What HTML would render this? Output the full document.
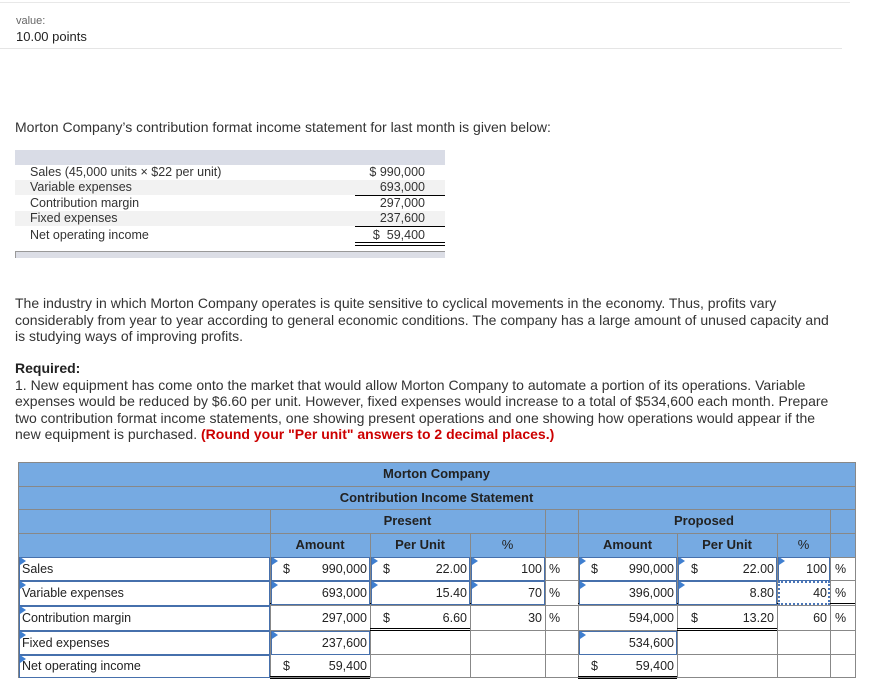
<!DOCTYPE html>
<html><head><meta charset="utf-8"><style>
*{margin:0;padding:0;box-sizing:border-box}
body{width:875px;height:692px;background:#fff;font-family:"Liberation Sans",Arial,sans-serif;color:#333;position:relative;overflow:hidden}
.a{position:absolute;white-space:nowrap}
p.t{position:absolute;left:15px;width:818px;font-size:14px;line-height:16.5px;color:#333}
.st{position:absolute;left:30px;font-size:12.5px;color:#333}
.sv{position:absolute;left:355px;width:70px;text-align:right;font-size:12.5px;color:#333}
.c{position:absolute;font-size:12.5px;color:#222;line-height:22px;height:23px}
.h{position:absolute;font-size:13px;font-weight:bold;color:#222;text-align:center;line-height:23px}
.in{position:absolute;border:1.5px solid #4670ac;background:#fff}
.tri{position:absolute;width:0;height:0;border-top:4px solid transparent;border-bottom:4px solid transparent;border-left:6px solid #3f7fd0}
.vl{position:absolute;width:1px;background:#888}
.hl{position:absolute;height:1px;background:#888}
</style></head><body>
<div class="a" style="left:0;top:2px;width:850px;height:1px;background:#e8e8e8"></div>
<div class="a" style="left:16px;top:15px;font-size:11px;color:#666">value:</div>
<div class="a" style="left:16px;top:29px;font-size:13px;color:#222">10.00 points</div>
<div class="a" style="left:0;top:48px;width:842px;height:1px;background:#e5e5e5"></div>
<div class="a" style="left:15px;top:119px;font-size:14px;color:#333">Morton Company’s contribution format income statement for last month is given below:</div>

<div class="a" style="left:15px;top:150px;width:430px;height:15px;background:#d9dce6"></div>
<div class="a" style="left:15px;top:180px;width:430px;height:15px;background:#f2f2f2"></div>
<div class="a" style="left:15px;top:211px;width:430px;height:15px;background:#f2f2f2"></div>
<div class="st" style="top:165px">Sales (45,000 units × $22 per unit)</div>
<div class="st" style="top:180px">Variable expenses</div>
<div class="st" style="top:196px">Contribution margin</div>
<div class="st" style="top:211px">Fixed expenses</div>
<div class="st" style="top:228px">Net operating income</div>
<div class="sv" style="top:165px">$ 990,000</div>
<div class="sv" style="top:180px">693,000</div>
<div class="sv" style="top:196px">297,000</div>
<div class="sv" style="top:211px">237,600</div>
<div class="sv" style="top:228px">$&nbsp;&nbsp;59,400</div>
<div class="a" style="left:355px;top:195px;width:90px;height:1px;background:#000"></div>
<div class="a" style="left:355px;top:226px;width:90px;height:1px;background:#000"></div>
<div class="a" style="left:355px;top:242px;width:90px;height:4px;border-top:1px solid #000;border-bottom:1px solid #000"></div>
<div class="a" style="left:15px;top:251px;width:430px;height:7px;background:#dcdee6;border-top:1px solid #999;border-left:1px solid #999"></div>

<p class="t" style="top:295px">The industry in which Morton Company operates is quite sensitive to cyclical movements in the economy. Thus, profits vary considerably from year to year according to general economic conditions. The company has a large amount of unused capacity and is studying ways of improving profits.</p>
<p class="t" style="top:360px"><b style="color:#222">Required:</b><br>1. New equipment has come onto the market that would allow Morton Company to automate a portion of its operations. Variable expenses would be reduced by $6.60 per unit. However, fixed expenses would increase to a total of $534,600 each month. Prepare two contribution format income statements, one showing present operations and one showing how operations would appear if the new equipment is purchased. <b style="color:#c00">(Round your "Per unit" answers to 2 decimal places.)</b></p>

<!-- table -->
<div class="a" style="left:18px;top:462px;width:837px;height:95px;background:#76aae2"></div>
<div class="a" style="left:18px;top:557px;width:837px;height:121px;background:#fff"></div>
<div class="hl" style="left:18px;top:462px;width:837px"></div>
<div class="hl" style="left:18px;top:486px;width:837px"></div>
<div class="hl" style="left:18px;top:509px;width:837px"></div>
<div class="hl" style="left:18px;top:533px;width:837px"></div>
<div class="hl" style="left:18px;top:557px;width:837px"></div>
<div class="hl" style="left:18px;top:580px;width:837px"></div>
<div class="hl" style="left:18px;top:605px;width:837px"></div>
<div class="hl" style="left:18px;top:630px;width:837px"></div>
<div class="hl" style="left:18px;top:654px;width:837px"></div>
<div class="hl" style="left:18px;top:677px;width:837px"></div>
<div class="vl" style="left:18px;top:462px;height:216px"></div>
<div class="vl" style="left:855px;top:462px;height:216px"></div>
<div class="vl" style="left:270px;top:509px;height:169px"></div>
<div class="vl" style="left:545px;top:509px;height:169px"></div>
<div class="vl" style="left:578px;top:509px;height:169px"></div>
<div class="vl" style="left:830px;top:509px;height:169px"></div>
<div class="vl" style="left:370px;top:533px;height:145px"></div>
<div class="vl" style="left:470px;top:533px;height:145px"></div>
<div class="vl" style="left:677px;top:533px;height:145px"></div>
<div class="vl" style="left:777px;top:533px;height:145px"></div>
<div class="a" style="left:270px;top:603px;width:275px;height:1px;background:#000"></div>
<div class="a" style="left:578px;top:603px;width:277px;height:1px;background:#000"></div>
<div class="a" style="left:370px;top:628px;width:100px;height:3px;border-top:1px solid #000;border-bottom:1px solid #000"></div>
<div class="a" style="left:677px;top:628px;width:100px;height:3px;border-top:1px solid #000;border-bottom:1px solid #000"></div>
<div class="a" style="left:270px;top:676px;width:100px;height:3px;border-top:1px solid #000;border-bottom:1px solid #000"></div>
<div class="a" style="left:578px;top:676px;width:99px;height:3px;border-top:1px solid #000;border-bottom:1px solid #000"></div>

<div class="h" style="left:18px;top:462px;width:837px">Morton Company</div>
<div class="h" style="left:18px;top:486px;width:837px">Contribution Income Statement</div>
<div class="h" style="left:270px;top:509px;width:275px">Present</div>
<div class="h" style="left:578px;top:509px;width:252px">Proposed</div>
<div class="h" style="left:270px;top:533px;width:100px">Amount</div>
<div class="h" style="left:370px;top:533px;width:100px">Per Unit</div>
<div class="h" style="left:470px;top:533px;width:75px;font-weight:normal">%</div>
<div class="h" style="left:578px;top:533px;width:99px">Amount</div>
<div class="h" style="left:677px;top:533px;width:100px">Per Unit</div>
<div class="h" style="left:777px;top:533px;width:53px;font-weight:normal">%</div>

<div class="in" style="left:19px;top:557px;width:251px;height:24px"></div>
<div class="in" style="left:19px;top:581px;width:251px;height:25px"></div>
<div class="in" style="left:19px;top:606px;width:251px;height:25px"></div>
<div class="in" style="left:19px;top:631px;width:251px;height:24px"></div>
<div class="in" style="left:19px;top:655px;width:251px;height:23px"></div>
<div class="in" style="left:271px;top:557px;width:99px;height:24px"></div>
<div class="in" style="left:371px;top:557px;width:99px;height:24px"></div>
<div class="in" style="left:471px;top:557px;width:74px;height:24px"></div>
<div class="in" style="left:271px;top:581px;width:99px;height:24px"></div>
<div class="in" style="left:371px;top:581px;width:99px;height:24px"></div>
<div class="in" style="left:471px;top:581px;width:74px;height:24px"></div>
<div class="in" style="left:271px;top:631px;width:99px;height:24px"></div>
<div class="in" style="left:579px;top:557px;width:98px;height:24px"></div>
<div class="in" style="left:678px;top:557px;width:99px;height:24px"></div>
<div class="in" style="left:778px;top:557px;width:52px;height:24px"></div>
<div class="in" style="left:579px;top:581px;width:98px;height:24px"></div>
<div class="in" style="left:678px;top:581px;width:99px;height:24px"></div>
<div class="in" style="left:778px;top:581px;width:52px;height:24px;border:2px dotted #4a76b8"></div>
<div class="in" style="left:579px;top:631px;width:98px;height:24px"></div>
<div class="tri" style="left:20px;top:557px"></div><div class="tri" style="left:20px;top:581px"></div><div class="tri" style="left:20px;top:606px"></div><div class="tri" style="left:20px;top:631px"></div><div class="tri" style="left:20px;top:655px"></div>
<div class="tri" style="left:272px;top:557px"></div><div class="tri" style="left:272px;top:581px"></div><div class="tri" style="left:272px;top:631px"></div>
<div class="tri" style="left:372px;top:557px"></div><div class="tri" style="left:372px;top:581px"></div>
<div class="tri" style="left:472px;top:557px"></div><div class="tri" style="left:472px;top:581px"></div>
<div class="tri" style="left:580px;top:557px"></div><div class="tri" style="left:580px;top:581px"></div><div class="tri" style="left:580px;top:631px"></div>
<div class="tri" style="left:679px;top:557px"></div><div class="tri" style="left:679px;top:581px"></div>
<div class="tri" style="left:779px;top:557px"></div>

<div class="c" style="left:22px;top:558px">Sales</div>
<div class="c" style="left:22px;top:582px">Variable expenses</div>
<div class="c" style="left:22px;top:607px">Contribution margin</div>
<div class="c" style="left:22px;top:632px">Fixed expenses</div>
<div class="c" style="left:22px;top:655px">Net operating income</div>
<div class="c" style="left:283px;top:558px">$</div>
<div class="c" style="left:283px;top:655px">$</div>
<div class="c" style="left:270px;top:558px;width:97px;text-align:right">990,000</div>
<div class="c" style="left:270px;top:582px;width:97px;text-align:right">693,000</div>
<div class="c" style="left:270px;top:607px;width:97px;text-align:right">297,000</div>
<div class="c" style="left:270px;top:632px;width:97px;text-align:right">237,600</div>
<div class="c" style="left:270px;top:655px;width:97px;text-align:right">59,400</div>
<div class="c" style="left:383px;top:558px">$</div>
<div class="c" style="left:383px;top:607px">$</div>
<div class="c" style="left:370px;top:558px;width:97px;text-align:right">22.00</div>
<div class="c" style="left:370px;top:582px;width:97px;text-align:right">15.40</div>
<div class="c" style="left:370px;top:607px;width:97px;text-align:right">6.60</div>
<div class="c" style="left:470px;top:558px;width:72px;text-align:right">100</div>
<div class="c" style="left:470px;top:582px;width:72px;text-align:right">70</div>
<div class="c" style="left:470px;top:607px;width:72px;text-align:right">30</div>
<div class="c" style="left:549px;top:558px">%</div>
<div class="c" style="left:549px;top:582px">%</div>
<div class="c" style="left:549px;top:607px">%</div>
<div class="c" style="left:591px;top:558px">$</div>
<div class="c" style="left:591px;top:655px">$</div>
<div class="c" style="left:578px;top:558px;width:96px;text-align:right">990,000</div>
<div class="c" style="left:578px;top:582px;width:96px;text-align:right">396,000</div>
<div class="c" style="left:578px;top:607px;width:96px;text-align:right">594,000</div>
<div class="c" style="left:578px;top:632px;width:96px;text-align:right">534,600</div>
<div class="c" style="left:578px;top:655px;width:96px;text-align:right">59,400</div>
<div class="c" style="left:691px;top:558px">$</div>
<div class="c" style="left:691px;top:607px">$</div>
<div class="c" style="left:677px;top:558px;width:97px;text-align:right">22.00</div>
<div class="c" style="left:677px;top:582px;width:97px;text-align:right">8.80</div>
<div class="c" style="left:677px;top:607px;width:97px;text-align:right">13.20</div>
<div class="c" style="left:777px;top:558px;width:50px;text-align:right">100</div>
<div class="c" style="left:777px;top:582px;width:50px;text-align:right">40</div>
<div class="c" style="left:777px;top:607px;width:50px;text-align:right">60</div>
<div class="c" style="left:835px;top:558px">%</div>
<div class="c" style="left:835px;top:582px">%</div>
<div class="c" style="left:835px;top:607px">%</div>
</body></html>
